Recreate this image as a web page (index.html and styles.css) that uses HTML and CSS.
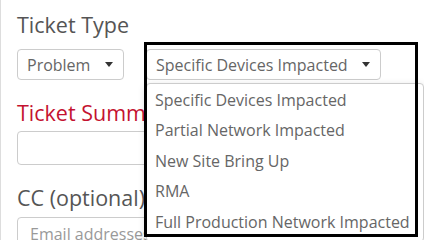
FILE: index.html
```html
<!DOCTYPE html>
<html lang="en">
<head>
    <meta charset="UTF-8">
    <meta name="viewport" content="width=device-width, initial-scale=1.0">
    <title>New Ticket</title>
    <link rel="stylesheet" href="styles.css">
</head>
<body>

    <div class="ticket-form">
        <h3 class="field-label">Ticket Type</h3>
        <div class="select-row">
            <div class="picker picker-type">
                <span class="picker-text">Problem</span>
                <span class="caret"></span>
            </div>
            <div class="picker-wrap">
                <div class="picker picker-impact">
                    <span class="picker-text">Specific Devices Impacted</span>
                    <span class="caret"></span>
                </div>
                <!-- open dropdown -->
                <ul class="picker-menu">
                    <li>Specific Devices Impacted</li>
                    <li>Partial Network Impacted</li>
                    <li>New Site Bring Up</li>
                    <li>RMA</li>
                    <li>Full Production Network Impacted</li>
                </ul>
            </div>
        </div>

        <h3 class="field-label required">Ticket Summary</h3>
        <input type="text" class="text-input summary-input">

        <h3 class="field-label cc-label">CC (optional)</h3>
        <input type="text" class="text-input email-input" placeholder="Email addresses">
    </div>

    <div class="highlight-box"></div>

</body>
</html>
```

FILE: styles.css
```css
html, body {
    margin: 0;
    height: 100%;
    overflow: hidden;
}
body {
    font-family: "Open Sans", "Noto Sans", sans-serif;
    background-color: #fff;
    color: #555;
    position: relative;
}
.ticket-form {
    border-left: 1px solid #ddd;
    padding: 11px 0 0 16px;
    height: 100%;
    box-sizing: border-box;
    overflow: hidden;
}
.field-label {
    margin: 0;
    font-size: 21.5px;
    font-weight: normal;
    line-height: 28px;
    color: #555;
}
.required {
    color: #c41230;
    margin-top: 19px;
}
.cc-label {
    margin-top: 19px;
}
.select-row {
    display: flex;
    gap: 22px;
    margin-top: 10px;
}
.picker {
    display: flex;
    align-items: center;
    justify-content: space-between;
    height: 31px;
    box-sizing: border-box;
    border: 1px solid #ccc;
    border-radius: 4px;
    padding: 0 10px 0 9px;
    font-size: 16px;
    color: #666;
    background-color: #fff;
}
.picker-type {
    width: 107px;
}
.picker-impact {
    width: 235px;
}
.caret {
    width: 0;
    height: 0;
    border-left: 4.5px solid transparent;
    border-right: 4.5px solid transparent;
    border-top: 5px solid #333;
}
.picker-wrap {
    position: relative;
}
.picker-menu {
    position: absolute;
    top: 34px;
    left: 0;
    width: 276px;
    margin: 0;
    padding: 1px 0 4px 0;
    list-style: none;
    background-color: #fff;
    border: 1px solid #ccc;
    border-radius: 4px;
    box-shadow: 0 3px 8px rgba(0, 0, 0, 0.18);
    font-size: 16px;
    color: #666;
    z-index: 2;
}
.picker-menu li {
    line-height: 30.4px;
    padding-left: 8px;
    white-space: nowrap;
}
.text-input {
    display: block;
    width: 440px;
    height: 34px;
    box-sizing: border-box;
    border: 1px solid #ccc;
    border-radius: 4px;
    padding: 0 12px;
    font-family: inherit;
    font-size: 16px;
    color: #666;
}
.summary-input {
    margin-top: 4px;
}
.email-input {
    margin-top: 5px;
}
.email-input::placeholder {
    color: #999;
}
.highlight-box {
    position: absolute;
    left: 144px;
    top: 42px;
    width: 274px;
    height: 195px;
    box-sizing: border-box;
    border: 3px solid #000;
    z-index: 3;
}
```
